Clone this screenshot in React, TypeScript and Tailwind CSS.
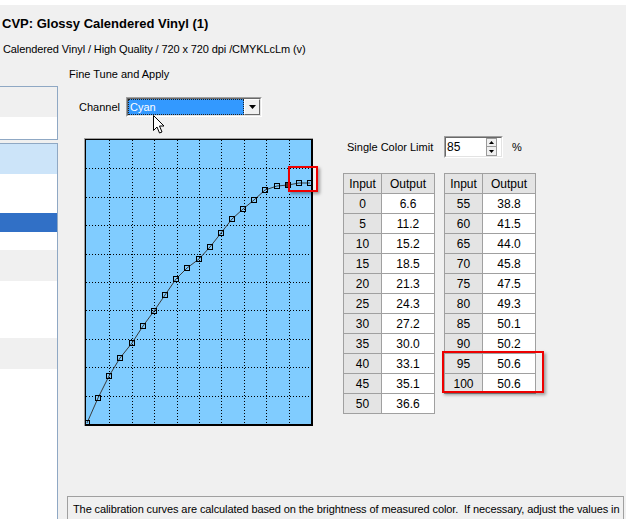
import React from "react"

const leftRows = [
  [0, "6.6"], [5, "11.2"], [10, "15.2"], [15, "18.5"], [20, "21.3"], [25, "24.3"],
  [30, "27.2"], [35, "30.0"], [40, "33.1"], [45, "35.1"], [50, "36.6"],
]
const rightRows = [
  [55, "38.8"], [60, "41.5"], [65, "44.0"], [70, "45.8"], [75, "47.5"],
  [80, "49.3"], [85, "50.1"], [90, "50.2"], [95, "50.6"], [100, "50.6"],
]

// y positions of the curve points inside the plot (measured from the screenshot)
const curveY = [283, 258, 236, 218, 203, 186, 171, 155, 139, 128, 119, 107, 93, 79, 69, 60, 50, 46, 45, 43, 43]

function CalTable({ rows }: { rows: (string | number)[][] }) {
  return (
    <div className="border-l border-t border-[#a0a0a0] w-[92px] shrink-0">
      <div className="flex h-[20px]">
        <div className="w-[38px] border-r border-b border-[#a0a0a0] bg-[#e4e4e4] flex items-center justify-center">Input</div>
        <div className="w-[53px] border-r border-b border-[#a0a0a0] bg-[#e4e4e4] flex items-center justify-center">Output</div>
      </div>
      {rows.map(([inp, out]) => (
        <div key={inp} className="flex h-[20px]">
          <div className="w-[38px] border-r border-b border-[#a0a0a0] bg-[#e4e4e4] flex items-center justify-center">{inp}</div>
          <div className="w-[53px] border-r border-b border-[#a0a0a0] bg-white flex items-center justify-center">{out}</div>
        </div>
      ))}
    </div>
  )
}

function Curve() {
  const gx = [1, 2, 3, 4, 5, 6, 7, 8, 9].map((i) => 1 + i * 22.4)
  const gy = [1, 2, 3, 4, 5, 6, 7, 8, 9].map((i) => 284 - i * 28.4)
  const pts = curveY.map((y, i) => [Math.round(1 + i * 11.15), y])
  return (
    <svg width="225" height="284" className="block">
      {gx.map((x) => (
        <line key={"v" + x} x1={Math.round(x) + 0.5} y1="0" x2={Math.round(x) + 0.5} y2="284" stroke="#000" strokeDasharray="1 2" />
      ))}
      {gy.map((y) => (
        <line key={"h" + y} x1="0" y1={Math.round(y) + 0.5} x2="225" y2={Math.round(y) + 0.5} stroke="#000" strokeDasharray="1 2" />
      ))}
      <polyline points={pts.map((p) => `${p[0]},${p[1]}`).join(" ")} fill="none" stroke="#3a3a3a" strokeWidth="1" />
      {pts.map(([x, y], i) => (
        <rect
          key={i}
          x={x - 2.5}
          y={y - 2.5}
          width="5"
          height="5"
          fill={i === 18 ? "#3a3a3a" : "none"}
          stroke="#000"
          strokeWidth="1"
        />
      ))}
    </svg>
  )
}

export default function App() {
  return (
    <div className="relative w-[626px] h-[519px] overflow-hidden bg-[#f0f0f0] text-black text-[11px] font-['Liberation_Sans',Arial,sans-serif]">
      <div className="h-[5px] bg-white" />
      <div className="pl-[2px] pt-[10px] h-[33px] text-[13px] font-bold leading-[18px]">CVP: Glossy Calendered Vinyl (1)</div>
      <div className="pl-[3px] mt-[4px] leading-[14px] whitespace-nowrap tracking-[-0.1px]">Calendered Vinyl / High Quality / 720 x 720 dpi /CMYKLcLm (v)</div>

      <div className="flex mt-[4px] h-[459px]">
        {/* left list */}
        <div className="w-[58px] shrink-0 flex flex-col pt-[26px]">
          <div className="border-t border-r border-b border-[#8fa8c4]">
            <div className="h-[30px] bg-[#f0f0f0]" />
            <div className="h-[22px] bg-white" />
          </div>
          <div className="h-[3px]" />
          <div className="flex-1 border-t border-r border-[#8fa8c4] bg-white flex flex-col">
            <div className="h-[30px] bg-[#cce4f9]" />
            <div className="h-[39px] bg-white" />
            <div className="h-[19px] bg-[#3170c6]" />
            <div className="h-[18px] bg-white" />
            <div className="h-[31px] bg-[#f0f0f0]" />
            <div className="h-[57px] bg-white" />
            <div className="h-[31px] bg-[#f0f0f0]" />
            <div className="flex-1 bg-white" />
          </div>
        </div>

        {/* fine tune */}
        <div className="flex-1 min-w-0 flex flex-col">
          <div className="pl-[11px] mt-[7px] leading-[14px]">Fine Tune and Apply</div>
          <div className="ml-[11px] mr-[3px] mt-[5px] h-px bg-[#a0a0a0]" />

          <div className="flex items-center mt-[11px] pl-[21px]">
            <div className="w-[47px] shrink-0">Channel</div>
            <div className="w-[136px] h-[20px] shrink-0 border border-t-[#a0a0a0] border-l-[#a0a0a0] border-r-white border-b-white">
              <div className="h-full flex border border-t-[#696969] border-l-[#696969] border-r-[#e3e3e3] border-b-[#e3e3e3] bg-white">
                <div className="flex-1 bg-[#3399ff] text-white border border-dotted border-[#222] pl-[1px] leading-[14px]">Cyan</div>
                <div className="w-[16px] bg-[#f0f0f0] border border-t-white border-l-white border-r-[#696969] border-b-[#696969] flex items-center justify-center">
                  <svg width="7" height="4"><path d="M0 0 H7 L3.5 4 Z" fill="#000" /></svg>
                </div>
              </div>
            </div>
          </div>

          <div className="flex items-start mt-[19px] pl-[26px]">
            <div className="relative shrink-0 mt-[2px] w-[229px] h-[288px] border-t border-l border-[#a0a0a0]">
              <div className="h-full border-t border-l border-r-2 border-b-2 border-black bg-[#80ccff] overflow-hidden">
                <Curve />
              </div>
              <div className="absolute left-[203px] top-[27px] w-[30px] h-[26px] border-2 border-[#ee0000] shadow-[2px_2px_3px_rgba(0,0,0,0.35)]" />
            </div>

            <div className="ml-[30px] shrink-0 flex flex-col text-[12px]">
              <div className="flex items-center h-[22px]">
                <div className="w-[101px] pl-[4px] text-[11px]">Single Color Limit</div>
                <div className="w-[59px] h-[22px] border border-t-[#a0a0a0] border-l-[#a0a0a0] border-r-white border-b-white">
                  <div className="h-full flex items-center bg-white border border-t-[#696969] border-l-[#696969] border-r-[#e3e3e3] border-b-[#e3e3e3] pl-[1px] pr-[4px]">
                    <div className="flex-1 leading-[14px]">85</div>
                    <div className="flex flex-col w-[11px]">
                      <div className="h-[9px] bg-[#f0f0f0] border border-[#9a9a9a] flex items-center justify-center">
                        <svg width="5" height="3"><path d="M2.5 0 L5 3 H0 Z" fill="#000" /></svg>
                      </div>
                      <div className="h-[9px] bg-[#f0f0f0] border border-t-0 border-[#9a9a9a] flex items-center justify-center">
                        <svg width="5" height="3"><path d="M0 0 H5 L2.5 3 Z" fill="#000" /></svg>
                      </div>
                    </div>
                  </div>
                </div>
                <div className="ml-[9px] text-[11px]">%</div>
              </div>

              <div className="flex items-start mt-[15px]">
                <CalTable rows={leftRows} />
                <div className="relative ml-[9px]">
                  <CalTable rows={rightRows} />
                  <div className="absolute left-[-2px] top-[178px] w-[102px] h-[42px] border-2 border-[#ee0000] shadow-[2px_2px_3px_rgba(0,0,0,0.35)]" />
                </div>
              </div>
            </div>
          </div>

          <div className="mt-[70px] ml-[9px] mr-[2px] border border-[#a0a0a0] px-[5px] pt-[5px] leading-[14px] h-[80px]">
            <div className="whitespace-pre tracking-[-0.1px]">The calibration curves are calculated based on the brightness of measured color.  If necessary, adjust the values in</div>
            <div className="whitespace-nowrap">each column so that the curves are smooth and increase without abrupt changes.</div>
          </div>
        </div>
      </div>

      {/* mouse pointer */}
      <svg className="absolute left-[153px] top-[115px]" width="12" height="20" viewBox="0 0 12 20">
        <path d="M0.5 0.5 L0.5 15.5 L4 12 L6.5 18 L9 17 L6.5 11 L11 11 Z" fill="#fff" stroke="#000" strokeWidth="1" />
      </svg>
    </div>
  )
}
